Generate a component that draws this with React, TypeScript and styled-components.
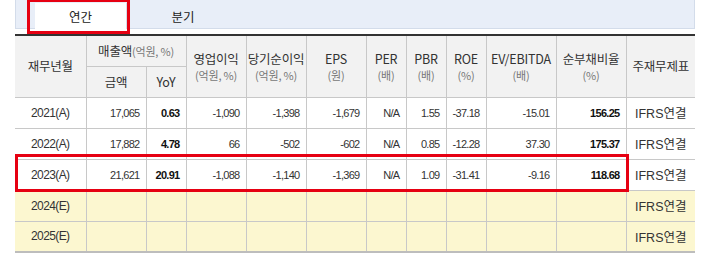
import styled, { createGlobalStyle } from "styled-components";

const GlobalStyle = createGlobalStyle`
  body {
    margin: 0;
    background: #fff;
    font-family: "Noto Sans CJK KR", "Liberation Sans", sans-serif;
    color: #333;
  }
`;

const Page = styled.div`
  width: 680px;
  padding-left: 15px;
`;

const TabBar = styled.nav`
  height: 29px;
  box-sizing: border-box;
  background-color: #e8eef8;
  border: 1px solid #d3dcea;
  border-top: none;
  display: flex;
  align-items: flex-end;
  padding-left: 19px;
  gap: 10px;
`;

const TabItem = styled.button<{ $active?: boolean }>`
  position: relative;
  width: 92px;
  height: 26px;
  margin-bottom: -1px;
  border: none;
  border-right: ${(props) => (props.$active ? "1px solid #d3dcea" : "none")};
  background-color: ${(props) => (props.$active ? "#fff" : "transparent")};
  font-family: "Noto Sans CJK KR", sans-serif;
  font-size: 12.5px;
  color: #222;
  padding: 0;
  &::after {
    content: "";
    display: ${(props) => (props.$active ? "block" : "none")};
    position: absolute;
    left: -8px;
    right: -4px;
    top: -4px;
    bottom: -5px;
    border: 3px solid #e60012;
    box-sizing: border-box;
  }
`;

const TableWrap = styled.div`
  position: relative;
  margin-top: 5px;
`;

const Table = styled.table`
  width: 680px;
  border-collapse: collapse;
  table-layout: fixed;
  border-top: 2px solid #333;
  border-bottom: 2px solid #bdbdbd;
  font-size: 12.5px;
`;

const HeadRow = styled.tr`
  height: 31px;
`;

const HeadCell = styled.th<{ $last?: boolean }>`
  background-color: #f2f2f2;
  font-weight: normal;
  color: #333;
  padding: 0;
  line-height: 18px;
  border-bottom: 1px solid #c8c8c8;
  border-right: ${(props) => (props.$last ? "none" : "1px solid #c8c8c8")};
  text-align: center;
  letter-spacing: -0.2px;
  white-space: nowrap;
`;

const Unit = styled.span`
  display: block;
  font-size: 11px;
  line-height: 14px;
  color: #777;
`;

const InlineUnit = styled.span`
  font-size: 11px;
  color: #777;
`;

const Row = styled.tr<{ $estimate?: boolean }>`
  height: 31px;
  background-color: ${(props) => (props.$estimate ? "#fcf7d0" : "#fff")};
`;

const YearCell = styled.td`
  padding: 0;
  text-align: center;
  font-family: "Liberation Sans", sans-serif;
  font-size: 12px;
  letter-spacing: -0.6px;
  color: #333;
  border-bottom: 1px solid #c8c8c8;
  border-right: 1px solid #c8c8c8;
`;

const NumCell = styled.td<{ $bold?: boolean }>`
  padding: 0 6px 0 0;
  text-align: right;
  font-family: "Liberation Sans", sans-serif;
  font-size: 11px;
  letter-spacing: -0.7px;
  font-weight: ${(props) => (props.$bold ? "bold" : "normal")};
  color: ${(props) => (props.$bold ? "#111" : "#333")};
  border-bottom: 1px solid #c8c8c8;
  border-right: 1px solid #c8c8c8;
`;

const TypeCell = styled.td`
  padding: 0;
  text-align: center;
  font-size: 12.5px;
  color: #333;
  border-bottom: 1px solid #c8c8c8;
  & > span {
    font-family: "Liberation Sans", sans-serif;
  }
`;

const Highlight = styled.div<{ $row: number }>`
  position: absolute;
  left: 0;
  width: 614px;
  top: ${(props) => 58 + props.$row * 31}px;
  height: 38px;
  border: 3px solid #e60012;
  box-sizing: border-box;
  pointer-events: none;
`;

const widths = [71, 60, 40, 60, 60, 60, 40, 40, 40, 70, 70, 69];

type Line = {
  year: string;
  values?: string[];
};

const lines: Line[] = [
  { year: "2021(A)", values: ["17,065", "0.63", "-1,090", "-1,398", "-1,679", "N/A", "1.55", "-37.18", "-15.01", "156.25"] },
  { year: "2022(A)", values: ["17,882", "4.78", "66", "-502", "-602", "N/A", "0.85", "-12.28", "37.30", "175.37"] },
  { year: "2023(A)", values: ["21,621", "20.91", "-1,088", "-1,140", "-1,369", "N/A", "1.09", "-31.41", "-9.16", "118.68"] },
  { year: "2024(E)" },
  { year: "2025(E)" },
];

const boldCols = [1, 9];

const App = () => {
  return (
    <Page>
      <GlobalStyle />
      <TabBar>
        <TabItem $active>연간</TabItem>
        <TabItem>분기</TabItem>
      </TabBar>
      <TableWrap>
        <Table>
          <colgroup>
            {widths.map((w, i) => (
              <col key={i} style={{ width: w }} />
            ))}
          </colgroup>
          <thead>
            <HeadRow>
              <HeadCell rowSpan={2}>재무년월</HeadCell>
              <HeadCell colSpan={2}>
                매출액<InlineUnit>(억원, %)</InlineUnit>
              </HeadCell>
              <HeadCell rowSpan={2}>
                영업이익<Unit>(억원, %)</Unit>
              </HeadCell>
              <HeadCell rowSpan={2}>
                당기순이익<Unit>(억원, %)</Unit>
              </HeadCell>
              <HeadCell rowSpan={2}>
                EPS<Unit>(원)</Unit>
              </HeadCell>
              <HeadCell rowSpan={2}>
                PER<Unit>(배)</Unit>
              </HeadCell>
              <HeadCell rowSpan={2}>
                PBR<Unit>(배)</Unit>
              </HeadCell>
              <HeadCell rowSpan={2}>
                ROE<Unit>(%)</Unit>
              </HeadCell>
              <HeadCell rowSpan={2}>
                EV/EBITDA<Unit>(배)</Unit>
              </HeadCell>
              <HeadCell rowSpan={2}>
                순부채비율<Unit>(%)</Unit>
              </HeadCell>
              <HeadCell rowSpan={2} $last>
                주재무제표
              </HeadCell>
            </HeadRow>
            <HeadRow>
              <HeadCell>금액</HeadCell>
              <HeadCell>YoY</HeadCell>
            </HeadRow>
          </thead>
          <tbody>
            {lines.map((line) => (
              <Row key={line.year} $estimate={!line.values}>
                <YearCell>{line.year}</YearCell>
                {Array.from({ length: 10 }).map((_, i) => (
                  <NumCell key={i} $bold={boldCols.includes(i)}>
                    {line.values ? line.values[i] : ""}
                  </NumCell>
                ))}
                <TypeCell
                  style={{ backgroundColor: line.values ? "#fff" : "#fcf7d0" }}
                >
                  <span>IFRS</span>연결
                </TypeCell>
              </Row>
            ))}
          </tbody>
        </Table>
        <Highlight $row={2} />
      </TableWrap>
    </Page>
  );
};

export default App;
